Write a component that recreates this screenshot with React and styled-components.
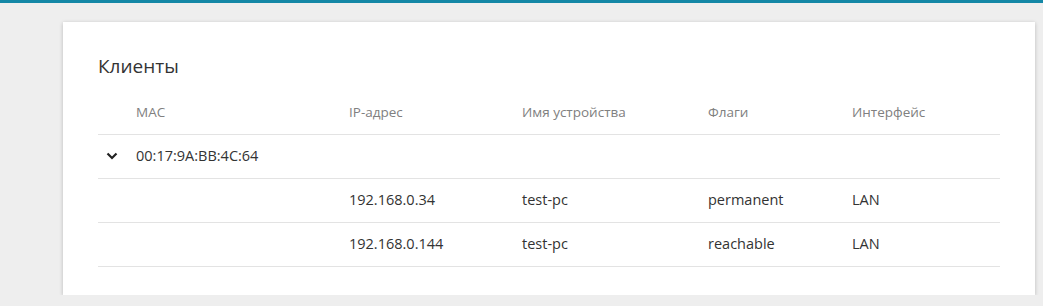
import React from "react";
import styled, { createGlobalStyle } from "styled-components";

const Global = createGlobalStyle`
  html, body { margin: 0; padding: 0; background: #eeeeee; }
  body { font-family: "Open Sans", "Noto Sans", sans-serif; color: #333; }
`;

const TopBar = styled.div`
  height: 3px;
  background: #1487a6;
`;

const Main = styled.main`
  padding: 19px 8px 0 63px;
`;

const Card = styled.section`
  width: 972px;
  box-sizing: border-box;
  background: #fff;
  box-shadow: 0 1px 4px rgba(0, 0, 0, 0.22);
  padding: 32px 35px 28px 35px;
`;

const Title = styled.h2`
  margin: 0;
  font-size: 19px;
  font-weight: 400;
  line-height: 24px;
  color: #333;
`;

const Table = styled.div`
  margin-top: 13px;
`;

const Row = styled.div`
  display: grid;
  grid-template-columns: 38px 213px 173px 186px 144px 1fr;
  align-items: center;
  box-sizing: border-box;
  height: 44px;
  padding-bottom: 2px;
  border-bottom: 1px solid #e3e3e3;
  font-size: ${(p) => (p.$head ? "13.5px" : "14.5px")};
  color: ${(p) => (p.$head ? "#808080" : "#333")};
`;

const Cell = styled.div`
  white-space: nowrap;
`;

const Toggle = styled.div`
  display: flex;
  align-items: center;
  padding-left: 8px;
`;

const Chevron = () => (
  <svg width="12" height="8" viewBox="0 0 12 8">
    <path d="M1.5 1.5 L6 6 L10.5 1.5" fill="none" stroke="#222" strokeWidth="2.2" />
  </svg>
);

const rows = [
  ["192.168.0.34", "test-pc", "permanent", "LAN"],
  ["192.168.0.144", "test-pc", "reachable", "LAN"],
];

export default function App() {
  return (
    <>
      <Global />
      <TopBar />
      <Main>
        <Card>
          <Title>Клиенты</Title>
          <Table>
            <Row $head>
              <Cell />
              <Cell>MAC</Cell>
              <Cell>IP-адрес</Cell>
              <Cell>Имя устройства</Cell>
              <Cell>Флаги</Cell>
              <Cell>Интерфейс</Cell>
            </Row>
            <Row>
              <Toggle>
                <Chevron />
              </Toggle>
              <Cell>00:17:9A:BB:4C:64</Cell>
              <Cell />
              <Cell />
              <Cell />
              <Cell />
            </Row>
            {rows.map((r) => (
              <Row key={r[0]}>
                <Cell />
                <Cell />
                {r.map((v, i) => (
                  <Cell key={i}>{v}</Cell>
                ))}
              </Row>
            ))}
          </Table>
        </Card>
      </Main>
    </>
  );
}
